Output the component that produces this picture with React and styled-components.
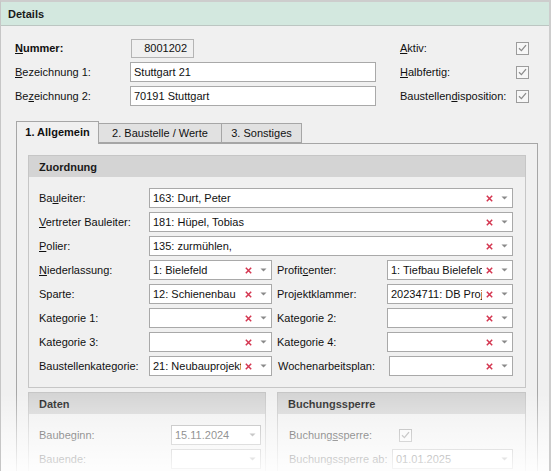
import React from "react";
import styled, { createGlobalStyle } from "styled-components";

const Global = createGlobalStyle`
  html, body { margin: 0; padding: 0; background: #ffffff; }
  body { font-family: "Liberation Sans", Arial, sans-serif; font-size: 11px; color: #111; }
  * { box-sizing: border-box; }
`;

const Frame = styled.div`
  position: relative;
  width: 551px;
  height: 471px;
  overflow: hidden;
  background: #f0f0f0;
  border-top: 2px solid #cdcdcd;
  border-left: 1px solid #c6c6c6;
  border-right: 2px solid #cdcdcd;
`;

const Header = styled.div`
  height: 24px;
  display: flex;
  align-items: center;
  padding-left: 7px;
  background: #d3e8df;
  border-bottom: 1px solid #bcc6c2;
  font-weight: bold;
  font-size: 11px;
  color: #1a1a1a;
`;

const Top = styled.div`
  display: grid;
  grid-template-columns: 115px 246px 24px 116px 14px;
  grid-auto-rows: 20px;
  row-gap: 4px;
  padding: 12px 0 0 14px;
  align-items: center;
`;

const Label = styled.div`
  white-space: nowrap;
  font-weight: ${(p) => (p.$bold ? "bold" : "normal")};
  padding-left: ${(p) => p.$pl || 0}px;
`;

const NumberBox = styled.div`
  width: 63px;
  height: 19px;
  margin-left: 1px;
  border: 1px solid #b4b4b4;
  background: #f0f0f0;
  display: flex;
  align-items: center;
  justify-content: flex-end;
  padding-right: 6px;
`;

const TextInput = styled.div`
  height: 20px;
  border: 1px solid #a9a9a9;
  background: #fff;
  display: flex;
  align-items: center;
  padding-left: 3px;
  white-space: nowrap;
  overflow: hidden;
`;

const Check = styled.div`
  width: 13px;
  height: 13px;
  border: 1px solid #9c9c9c;
  background: #f7f7f7;
  display: flex;
  align-items: center;
  justify-content: center;
  margin-left: ${(p) => p.$ml || 0}px;
`;

const TabRow = styled.div`
  display: flex;
  align-items: flex-end;
  margin: 15px 0 0 15px;
  height: 22px;
  position: relative;
  z-index: 1;
`;

const Tab = styled.div`
  width: ${(p) => p.$w}px;
  height: ${(p) => (p.$active ? 23 : 20)}px;
  margin-bottom: ${(p) => (p.$active ? -1 : 0)}px;
  margin-left: ${(p) => (p.$first ? 0 : -1)}px;
  border: 1px solid #a6a6a6;
  border-bottom: ${(p) => (p.$active ? "none" : "1px solid #a6a6a6")};
  background: ${(p) => (p.$active ? "#f0f0f0" : "#e1e1e1")};
  font-weight: ${(p) => (p.$active ? "bold" : "normal")};
  display: flex;
  align-items: center;
  justify-content: center;
  padding-bottom: ${(p) => (p.$active ? 2 : 0)}px;
  position: relative;
  z-index: ${(p) => (p.$active ? 2 : 1)};
  white-space: nowrap;
`;

const Panel = styled.div`
  margin-left: 15px;
  width: 522px;
  height: 400px;
  border: 1px solid #a6a6a6;
  padding: 11px;
  display: flex;
  flex-direction: column;
  align-items: stretch;
  gap: 4px;
`;

const Group = styled.div`
  border: 1px solid #c6c6c6;
  width: ${(p) => (p.$w ? `${p.$w}px` : "auto")};
  flex: ${(p) => (p.$grow ? "1 1 0" : "none")};
  min-width: 0;
`;

const GroupHead = styled.div`
  height: 21px;
  background: #d4d4d4;
  display: flex;
  align-items: center;
  padding-left: 10px;
  font-weight: bold;
  color: #1a1a1a;
`;

const GroupBody = styled.div`
  display: grid;
  grid-template-columns: ${(p) => p.$cols};
  grid-auto-rows: 20px;
  row-gap: 4px;
  align-items: center;
  padding: 11px ${(p) => p.$pr ?? 12}px 11px ${(p) => p.$pl ?? 10}px;
`;

const GroupPair = styled.div`
  display: flex;
  gap: 11px;
`;

const ComboBox = styled.div`
  height: 20px;
  min-width: 0;
  overflow: hidden;
  border: 1px solid #a9a9a9;
  background: #fff;
  display: flex;
  align-items: center;
  grid-column: ${(p) => p.$span || "auto"};
  margin-left: ${(p) => p.$ml || 0}px;
`;

const ComboText = styled.div`
  flex: 1;
  min-width: 0;
  overflow: hidden;
  white-space: nowrap;
  padding-left: 3px;
  color: #111;
`;

const IconSlot = styled.div`
  width: ${(p) => p.$w}px;
  display: flex;
  align-items: center;
  justify-content: center;
  flex: none;
`;

const Fade = styled.div`
  position: absolute;
  left: 0;
  right: 0;
  bottom: 0;
  height: 78px;
  pointer-events: none;
  background: linear-gradient(to bottom, rgba(255,255,255,0) 0%, rgba(255,255,255,0.5) 50%, rgba(255,255,255,0.9) 100%);
  z-index: 5;
`;

const CheckMark = () => (
  <svg width="9" height="8" viewBox="0 0 9 8">
    <path d="M1 4.3 L3.4 6.6 L8 1.2" fill="none" stroke="#8c8c8c" strokeWidth="1.3" />
  </svg>
);

const ClearX = () => (
  <svg width="7" height="7" viewBox="0 0 7 7">
    <path d="M0.8 0.8 L6.2 6.2 M6.2 0.8 L0.8 6.2" stroke="#d43650" strokeWidth="1.5" />
  </svg>
);

const Arrow = () => (
  <svg width="7" height="4" viewBox="0 0 7 4">
    <path d="M0.5 0.5 L6.5 0.5 L3.5 3.5 Z" fill="#8a8a8a" />
  </svg>
);

const Combo = ({ text = "", span, ml }) => (
  <ComboBox $span={span} $ml={ml}>
    <ComboText>{text}</ComboText>
    <IconSlot $w={14}>
      <ClearX />
    </IconSlot>
    <IconSlot $w={16}>
      <Arrow />
    </IconSlot>
  </ComboBox>
);

const DateBox = ({ text }) => (
  <ComboBox>
    <ComboText>{text}</ComboText>
    <IconSlot $w={16}>
      <Arrow />
    </IconSlot>
  </ComboBox>
);

const M = styled.span`
  text-decoration: underline;
  text-underline-offset: 1px;
`;

export default function App() {
  return (
    <>
      <Global />
      <Frame>
        <Header>Details</Header>
        <Top>
          <Label $bold>
            <M>N</M>ummer:
          </Label>
          <NumberBox>8001202</NumberBox>
          <div />
          <Label>
            <M>A</M>ktiv:
          </Label>
          <Check>
            <CheckMark />
          </Check>

          <Label>
            <M>B</M>ezeichnung 1:
          </Label>
          <TextInput>Stuttgart 21</TextInput>
          <div />
          <Label>
            <M>H</M>albfertig:
          </Label>
          <Check>
            <CheckMark />
          </Check>

          <Label>
            Be<M>z</M>eichnung 2:
          </Label>
          <TextInput>70191 Stuttgart</TextInput>
          <div />
          <Label>
            Baustellen<M>d</M>isposition:
          </Label>
          <Check>
            <CheckMark />
          </Check>
        </Top>

        <TabRow>
          <Tab $active $first $w={83}>
            1. Allgemein
          </Tab>
          <Tab $w={124}>2. Baustelle / Werte</Tab>
          <Tab $w={81}>3. Sonstiges</Tab>
        </TabRow>

        <Panel>
          <Group>
            <GroupHead>Zuordnung</GroupHead>
            <GroupBody $cols="110px 123px 115px minmax(0, 1fr)">
              <Label>
                Ba<M>u</M>leiter:
              </Label>
              <Combo text="163: Durt, Peter" span="2 / 5" />

              <Label>
                <M>V</M>ertreter Bauleiter:
              </Label>
              <Combo text="181: Hüpel, Tobias" span="2 / 5" />

              <Label>
                <M>P</M>olier:
              </Label>
              <Combo text="135: zurmühlen," span="2 / 5" />

              <Label>
                <M>N</M>iederlassung:
              </Label>
              <Combo text="1: Bielefeld" />
              <Label $pl={5}>
                Profit<M>c</M>enter:
              </Label>
              <Combo text="1: Tiefbau Bielefeld" />

              <Label>Sparte:</Label>
              <Combo text="12: Schienenbau" />
              <Label $pl={5}>Projektklammer:</Label>
              <Combo text="20234711: DB Projekt" />

              <Label>Kategorie 1:</Label>
              <Combo />
              <Label $pl={5}>Kategorie 2:</Label>
              <Combo />

              <Label>Kategorie 3:</Label>
              <Combo />
              <Label $pl={5}>Kategorie 4:</Label>
              <Combo />

              <Label>Baustellenkategorie:</Label>
              <Combo text="21: Neubauprojekt" />
              <Label $pl={6}>Wochenarbeitsplan:</Label>
              <Combo ml={2} />
            </GroupBody>
          </Group>

          <GroupPair>
            <Group $w={238}>
              <GroupHead>Daten</GroupHead>
              <GroupBody $cols="132px 90px" $pr={4}>
                <Label>Baubeginn:</Label>
                <DateBox text="15.11.2024" />
                <Label>Bauende:</Label>
                <DateBox text="" />
              </GroupBody>
            </Group>
            <Group $grow>
              <GroupHead>Buchungssperre</GroupHead>
              <GroupBody $cols="103px minmax(0, 1fr)" $pl={11}>
                <Label>
                  Buchung<M>s</M>sperre:
                </Label>
                <Check $ml={7}>
                  <CheckMark />
                </Check>
                <Label>Buchungssperre ab:</Label>
                <DateBox text="01.01.2025" />
              </GroupBody>
            </Group>
          </GroupPair>
        </Panel>
        <Fade />
      </Frame>
    </>
  );
}
